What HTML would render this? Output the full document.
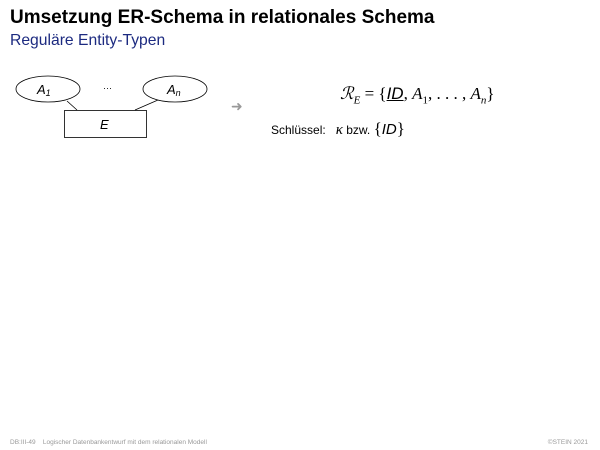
<!DOCTYPE html>
<html><head><meta charset="utf-8"><style>
body{margin:0;width:600px;height:450px;background:#fff;position:relative;overflow:hidden;font-family:"Liberation Sans",sans-serif}
.a{position:absolute;white-space:nowrap}
</style></head><body>
<div class="a" style="left:10px;top:7px;font-size:19px;font-weight:bold;color:#000">Umsetzung ER-Schema in relationales Schema</div>
<div class="a" style="left:10px;top:32px;font-size:15.7px;color:#1c2a80">Reguläre Entity-Typen</div>
<svg class="a" style="left:0;top:0" width="600" height="450">
<ellipse cx="48" cy="89" rx="32" ry="13" fill="none" stroke="#000" stroke-width="0.8"/>
<ellipse cx="175" cy="89" rx="32" ry="13" fill="none" stroke="#000" stroke-width="0.8"/>
<rect x="64.5" y="110.5" width="82" height="27" fill="none" stroke="#000" stroke-width="0.8"/>
<line x1="67" y1="101" x2="77" y2="110" stroke="#000" stroke-width="0.8"/>
<line x1="158" y1="100" x2="135" y2="110" stroke="#000" stroke-width="0.8"/>
<text x="37" y="94" font-size="13" font-style="italic" font-family="Liberation Sans">A<tspan font-size="9" dy="2">1</tspan></text>
<text x="167" y="94" font-size="13" font-style="italic" font-family="Liberation Sans">A<tspan font-size="9" dy="2">n</tspan></text>
<text x="103" y="91" font-size="9" font-family="Liberation Sans">···</text>
<text x="100" y="129" font-size="13" font-style="italic" font-family="Liberation Sans">E</text>
<text x="231" y="111" font-size="14" fill="#999" font-family="DejaVu Sans">➜</text>
</svg>
<div class="a" style="left:340px;top:84px;font-size:17px;font-family:'Liberation Serif',serif"><i>ℛ</i><sub style="font-size:11px"><i>E</i></sub> = {<u style="font-family:'Liberation Sans';font-style:italic">ID</u>, <i>A</i><sub style="font-size:11px">1</sub>, . . . , <i>A<sub style="font-size:11px">n</sub></i>}</div>
<div class="a" style="left:271px;top:119px;font-size:12px">Schlüssel:&nbsp;&nbsp; <span style="font-family:'Liberation Serif';font-style:italic;font-size:15px">κ</span> bzw. <span style="font-family:'Liberation Serif';font-size:17px">{</span><i style="font-size:15px">ID</i><span style="font-family:'Liberation Serif';font-size:17px">}</span></div>
<div class="a" style="left:10px;top:439px;font-size:6.5px;color:#999">DB:III-49&nbsp;&nbsp;&nbsp; Logischer Datenbankentwurf mit dem relationalen Modell</div>
<div class="a" style="right:12px;top:439px;font-size:6.5px;color:#999">©STEIN 2021</div>
</body></html>
